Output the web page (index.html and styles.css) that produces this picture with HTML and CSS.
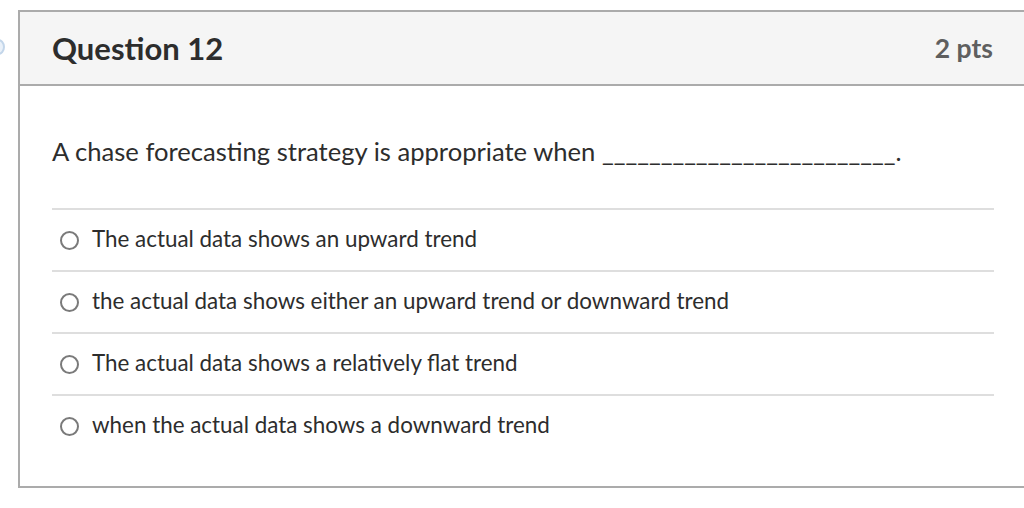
FILE: index.html
```html
<!DOCTYPE html>
<html lang="en">
<head>
<meta charset="utf-8">
<title>Question 12</title>
<link rel="stylesheet" href="styles.css">
</head>
<body>
<span class="nav-dot"></span>
<div class="question">
  <div class="q-header">
    <h2 class="q-title">Question 12</h2>
    <span class="q-pts">2 pts</span>
  </div>
  <div class="q-body">
    <p class="q-text">A chase forecasting strategy is appropriate when _________________________.</p>
    <ul class="answers">
      <li class="answer"><span class="radio"></span><span>The actual data shows an upward trend</span></li>
      <li class="answer"><span class="radio"></span><span>the actual data shows either an upward trend or downward trend</span></li>
      <li class="answer"><span class="radio"></span><span>The actual data shows a relatively flat trend</span></li>
      <li class="answer"><span class="radio"></span><span>when the actual data shows a downward trend</span></li>
    </ul>
  </div>
</div>
</body>
</html>
```

FILE: styles.css
```css
html, body {
  margin: 0;
  padding: 0;
  background: #fff;
  overflow: hidden;
  width: 1024px;
  height: 508px;
}
body {
  font-family: Lato, "Noto Sans", sans-serif;
  color: #2d2d2d;
  position: relative;
}
.nav-dot {
  position: absolute;
  left: -9px;
  top: 39px;
  width: 10px;
  height: 12px;
  border-radius: 50%;
  border: 2px solid #c3d6ea;
  background: #eaf1f9;
}
.question {
  margin: 10px 0 0 18px;
  width: 1006px;
  border: 2px solid #ababab;
  box-sizing: content-box;
}
.q-header {
  background: #f5f5f5;
  border-bottom: 2px solid #ababab;
  height: 72px;
  padding: 0 32px;
  display: flex;
  align-items: center;
  justify-content: space-between;
}
.q-title {
  margin: 0;
  font-size: 31px;
  line-height: 36px;
  font-weight: 700;
  color: #2d2d2d;
}
.q-pts {
  font-size: 26.5px;
  line-height: 32px;
  font-weight: 700;
  color: #5f5f5f;
  margin-right: 1px;
}
.q-body {
  padding: 49px 32px 30px;
}
.q-text {
  margin: 0 0 41px;
  font-size: 25.6px;
  line-height: 32px;
}
.answers {
  list-style: none;
  margin: 0;
  padding: 0;
}
.answer {
  border-top: 2px solid #dedede;
  height: 60px;
  display: flex;
  align-items: center;
  font-size: 22.4px;
  line-height: 28px;
}
.answer span:last-child {
  position: relative;
  top: -1px;
}
.radio {
  width: 15px;
  height: 15px;
  border: 2px solid #7a7a7a;
  border-radius: 50%;
  margin: 0 13px 0 8px;
  flex: none;
}
```
